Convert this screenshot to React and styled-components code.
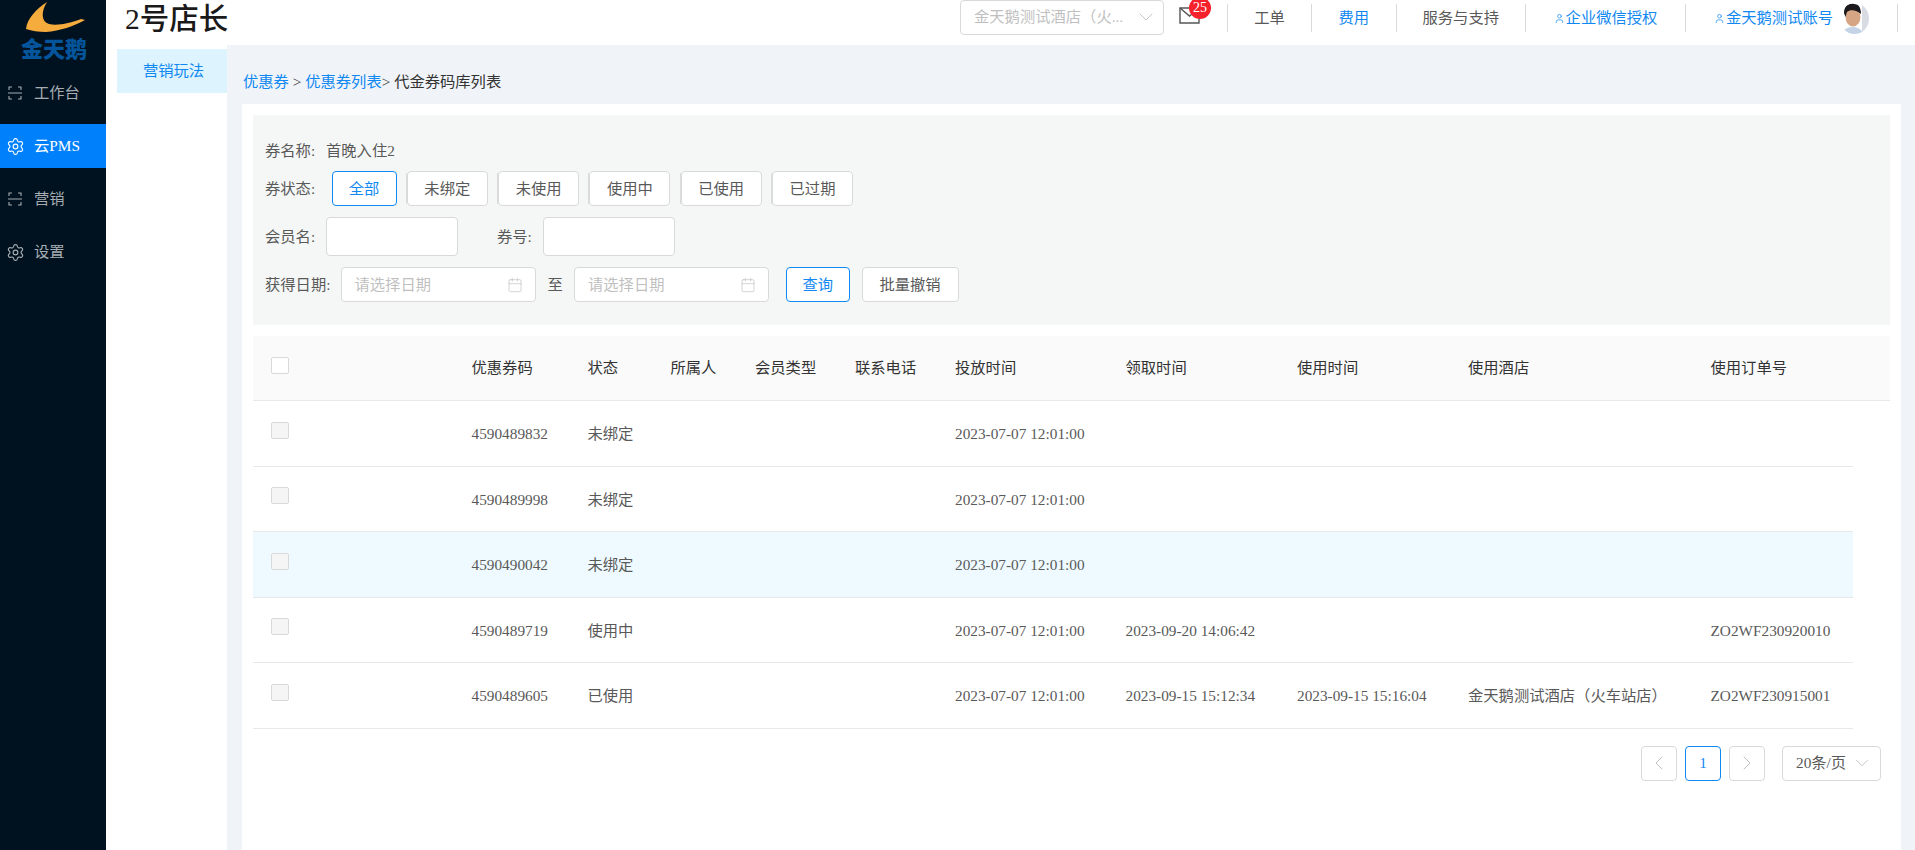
import React from "react";
import styled, { createGlobalStyle } from "styled-components";
import { Calendar, ChevronDown, ChevronLeft, ChevronRight, Settings, User } from "lucide-react";

const menu = [
  { name: "工作台", icon: "scan" },
  { name: "云PMS", icon: "gear", active: true },
  { name: "营销", icon: "scan" },
  { name: "设置", icon: "gear" },
];

const statuses = ["全部", "未绑定", "未使用", "使用中", "已使用", "已过期"];

const columns = ["优惠券码", "状态", "所属人", "会员类型", "联系电话", "投放时间", "领取时间", "使用时间", "使用酒店", "使用订单号"];

const coupons = [
  { code: "4590489832", status: "未绑定", sent: "2023-07-07 12:01:00" },
  { code: "4590489998", status: "未绑定", sent: "2023-07-07 12:01:00" },
  { code: "4590490042", status: "未绑定", sent: "2023-07-07 12:01:00", hover: true },
  { code: "4590489719", status: "使用中", sent: "2023-07-07 12:01:00", got: "2023-09-20 14:06:42", order: "ZO2WF230920010" },
  {
    code: "4590489605",
    status: "已使用",
    sent: "2023-07-07 12:01:00",
    got: "2023-09-15 15:12:34",
    used: "2023-09-15 15:16:04",
    hotel: "金天鹅测试酒店（火车站店）",
    order: "ZO2WF230915001",
  },
];

const App = () => {
  return (
    <Page>
      <GlobalStyle />
      <Sidebar>
        <Logo>
          <svg width="60" height="38" viewBox="0 0 60 38">
            <path d="M21 0 C10 7 1 17 0 27 C6 29 12 30 20 30 C34 29 48 24 59 18 L55 17 C44 21 32 24 23 22 C15 20 15 9 21 0 Z" fill="#f6ac3c" />
          </svg>
          <LogoText>金天鹅</LogoText>
        </Logo>
        {menu.map((item) => (
          <MenuItem key={item.name} $active={item.active}>
            {item.icon === "scan" ? <ScanIcon /> : <GearIcon size={19} strokeWidth={1.4} />}
            {item.name}
          </MenuItem>
        ))}
      </Sidebar>
      <Main>
        <TopBar>
          <Brand>2号店长</Brand>
          <HotelSelect>
            金天鹅测试酒店（火...
            <ChevronDown size={24} strokeWidth={0.9} />
          </HotelSelect>
          <Inbox>
            <MailIcon />
            <Badge>25</Badge>
          </Inbox>
          <TopLink $width={85} $first>工单</TopLink>
          <TopLink $width={84.5} $blue>费用</TopLink>
          <TopLink $width={129.5}>服务与支持</TopLink>
          <TopLink $width={160} $blue>
            <User size={11} strokeWidth={1.5} />
            企业微信授权
          </TopLink>
          <TopLink $width={212} $blue>
            <User size={11} strokeWidth={1.5} />
            金天鹅测试账号
            <Avatar />
          </TopLink>
        </TopBar>
        <Body>
          <SubNav>
            <SubNavItem>营销玩法</SubNavItem>
          </SubNav>
          <Content>
            <Breadcrumb>
              <a>优惠券</a> &gt; <a>优惠券列表</a>&gt; 代金券码库列表
            </Breadcrumb>
            <Card>
              <Filter>
                <NameRow>
                  <Label $width={61}>券名称:</Label>
                  <span>首晚入住2</span>
                </NameRow>
                <FilterRow>
                  <Label $width={66.5}>券状态:</Label>
                  <StatusGroup>
                    {statuses.map((s, i) => (
                      <StatusButton key={s} $active={i === 0} $narrow={i === 0}>
                        {s}
                      </StatusButton>
                    ))}
                  </StatusGroup>
                </FilterRow>
                <FilterRow>
                  <Label $width={61}>会员名:</Label>
                  <TextInput />
                  <Label $width={46} $left={39}>券号:</Label>
                  <TextInput />
                </FilterRow>
                <FilterRow>
                  <Label $width={75.5}>获得日期:</Label>
                  <DateInput>
                    请选择日期
                    <Calendar size={16} strokeWidth={1} />
                  </DateInput>
                  <To>至</To>
                  <DateInput>
                    请选择日期
                    <Calendar size={16} strokeWidth={1} />
                  </DateInput>
                  <ActionButton $primary $width={64.5}>查询</ActionButton>
                  <ActionButton $width={97}>批量撤销</ActionButton>
                </FilterRow>
              </Filter>
              <HeadRow>
                <Check $head />
                {columns.map((c) => (
                  <span key={c}>{c}</span>
                ))}
              </HeadRow>
              {coupons.map((c) => (
                <Row key={c.code} $hover={c.hover}>
                  <Check />
                  <span>{c.code}</span>
                  <span>{c.status}</span>
                  <span />
                  <span />
                  <span />
                  <span>{c.sent}</span>
                  <span>{c.got}</span>
                  <span>{c.used}</span>
                  <span>{c.hotel}</span>
                  <span>{c.order}</span>
                </Row>
              ))}
              <Pagination>
                <PageButton $muted>
                  <ChevronLeft size={24} strokeWidth={1} />
                </PageButton>
                <PageButton $active>1</PageButton>
                <PageButton $muted>
                  <ChevronRight size={24} strokeWidth={1} />
                </PageButton>
                <PageSize>
                  20条/页
                  <ChevronDown size={22} strokeWidth={1} />
                </PageSize>
              </Pagination>
            </Card>
          </Content>
        </Body>
      </Main>
    </Page>
  );
};

export default App;

const ScanIcon = () => (
  <svg width="16" height="16" viewBox="0 0 16 16" fill="none" stroke="currentColor" strokeWidth="1.1">
    <path d="M5 2 H2 V5 M11 2 H14 V5 M5 14 H2 V11 M11 14 H14 V11 M1 8 H15" />
  </svg>
);

const MailIcon = () => (
  <svg width="21" height="17" viewBox="0 0 21 17" fill="none" stroke="#555" strokeWidth="1.4">
    <path d="M1 1 H20 V16 H1 Z" />
    <path d="M1 1 L10.5 9 L15 5.5" />
  </svg>
);

const Avatar = () => (
  <AvatarWrap>
    <svg width="29" height="31" viewBox="0 0 29 31">
      <rect x="22" y="0" width="7" height="31" fill="#d8dbe4" />
      <path d="M2 31 C3 26 8 24 13 24 C17 24 22 26 23 31 Z" fill="#c4d4e6" />
      <ellipse cx="13" cy="14" rx="7.5" ry="9.5" fill="#d6a684" />
      <path d="M4 10 C4 3 9 0 14 1 C19 1 21 5 21 11 C17 7 10 6 7 9 L5.5 14 Z" fill="#1c1a1c" />
    </svg>
  </AvatarWrap>
);

const GlobalStyle = createGlobalStyle`
  html,
  body {
    margin: 0;
    height: 100%;
    overflow: hidden;
  }

  body {
    font-family: "Liberation Serif", "Noto Sans CJK SC", serif;
    font-size: 15.3px;
    line-height: 20px;
    color: #595959;
  }

  * {
    box-sizing: border-box;
  }
`;

const Page = styled.div`
  display: flex;
  height: 850px;
`;

const Sidebar = styled.aside`
  flex: 0 0 106px;
  background: #00121f;
`;

const Logo = styled.div`
  display: flex;
  flex-direction: column;
  align-items: flex-start;
  height: 66px;
  padding: 2px 0 0 26px;
  margin-bottom: 5px;

  svg {
    display: block;
  }
`;

const LogoText = styled.div`
  margin: -3px 0 0 -5px;
  font-family: "Noto Sans CJK SC", sans-serif;
  font-size: 22px;
  line-height: 20px;
  font-weight: 900;
  color: #05559c;
  white-space: nowrap;
`;

const MenuItem = styled.div`
  display: flex;
  align-items: center;
  gap: 11px;
  height: 44px;
  padding-left: 7px;
  margin-bottom: 9px;
  color: ${({ $active }) => ($active ? "#fff" : "#a6adb3")};
  background: ${({ $active }) => ($active ? "#0080fb" : "transparent")};

  svg {
    flex: none;
  }
`;

const GearIcon = styled(Settings)`
  margin: 0 -1.5px;
`;

const Main = styled.div`
  display: flex;
  flex-direction: column;
  flex: 1;
  min-width: 0;
`;

const TopBar = styled.header`
  display: flex;
  align-items: flex-start;
  height: 45px;
  padding: 4px 17px 0 19px;
  background: #fff;
`;

const Brand = styled.div`
  margin: 0 auto 0 0;
  font-size: 29.5px;
  line-height: 31px;
  font-weight: 500;
  color: #1a1a1a;
`;

const HotelSelect = styled.div`
  display: flex;
  align-items: center;
  justify-content: space-between;
  width: 204px;
  height: 34.5px;
  margin-top: -4px;
  padding: 0 5px 0 13px;
  color: #bfbfbf;
  white-space: nowrap;
  background: #fff;
  border: 1px solid #d9d9d9;
  border-radius: 4px;
`;

const Inbox = styled.div`
  position: relative;
  width: 21px;
  margin: 3px 27px 0 15px;
  line-height: 0;
`;

const Badge = styled.span`
  position: absolute;
  top: -10px;
  left: 10px;
  width: 22px;
  height: 22px;
  font-size: 14px;
  line-height: 22px;
  text-align: center;
  color: #fff;
  background: #f5222d;
  border-radius: 50%;
`;

const TopLink = styled.div`
  display: flex;
  align-items: center;
  justify-content: center;
  flex: none;
  gap: 1px;
  width: ${({ $width }) => $width}px;
  height: 28px;
  white-space: nowrap;
  color: ${({ $blue }) => ($blue ? "#1088f2" : "#595959")};
  border-right: 1px solid #d9d9d9;
  border-left: ${({ $first }) => ($first ? "1px solid #d9d9d9" : "none")};
`;

const AvatarWrap = styled.span`
  display: block;
  height: 31px;
  margin-left: 6px;
  overflow: hidden;
  border-radius: 50%;
`;

const Body = styled.div`
  display: flex;
  flex: 1;
  min-height: 0;
`;

const SubNav = styled.nav`
  flex: 0 0 121px;
  padding: 4px 0 0 11px;
  background: #fff;
`;

const SubNavItem = styled.div`
  height: 44px;
  padding-left: 3px;
  line-height: 44px;
  text-align: center;
  color: #1088f2;
  background: #ddf4ff;
`;

const Content = styled.main`
  display: flex;
  flex-direction: column;
  flex: 1;
  min-width: 0;
  padding: 0 14px 0 15px;
  background: #f0f4f8;
`;

const Breadcrumb = styled.div`
  height: 59px;
  padding: 27px 0 0 1px;
  color: #333;

  a {
    color: #1088f2;
  }
`;

const Card = styled.section`
  flex: 1;
  padding: 11px 11px 0;
  background: #fff;
`;

const Filter = styled.div`
  display: flex;
  flex-direction: column;
  gap: 11px;
  height: 210px;
  padding: 25px 12px 0;
  margin-bottom: 11px;
  background: #f5f7f7;
`;

const FilterRow = styled.div`
  display: flex;
  align-items: center;
  min-height: 20px;
`;

const NameRow = styled(FilterRow)`
  height: 20px;
  padding-top: 2px;
`;

const Label = styled.span`
  flex: none;
  width: ${({ $width }) => $width}px;
  margin-left: ${({ $left }) => $left || 0}px;
`;

const StatusGroup = styled.div`
  display: flex;
  gap: 10.3px;
`;

const StatusButton = styled.div`
  position: relative;
  width: ${({ $narrow }) => ($narrow ? 65 : 81)}px;
  height: 35px;
  line-height: 33px;
  text-align: center;
  color: ${({ $active }) => ($active ? "#1088f2" : "#595959")};
  background: #fff;
  border: 1px solid ${({ $active }) => ($active ? "#1088f2" : "#d9d9d9")};
  border-radius: 4px;

  &::before {
    content: "";
    display: ${({ $active }) => ($active ? "none" : "block")};
    position: absolute;
    top: 1px;
    bottom: 1px;
    left: -2px;
    width: 1px;
    background: #dcdcdc;
  }
`;

const TextInput = styled.div`
  flex: none;
  width: 132px;
  height: 39px;
  background: #fff;
  border: 1px solid #d9d9d9;
  border-radius: 4px;
`;

const DateInput = styled.div`
  display: flex;
  align-items: center;
  justify-content: space-between;
  flex: none;
  width: 195px;
  height: 35px;
  padding: 0 12px 0 13px;
  color: #bfbfbf;
  background: #fff;
  border: 1px solid #d9d9d9;
  border-radius: 4px;
`;

const To = styled.span`
  flex: none;
  width: 38.5px;
  padding-left: 1px;
  text-align: center;
`;

const ActionButton = styled.div`
  flex: none;
  width: ${({ $width }) => $width}px;
  height: 35px;
  margin-left: ${({ $primary }) => ($primary ? 16.5 : 11.5)}px;
  line-height: 34px;
  text-align: center;
  color: ${({ $primary }) => ($primary ? "#1088f2" : "#595959")};
  background: #fff;
  border: 1px solid ${({ $primary }) => ($primary ? "#1088f2" : "#d9d9d9")};
  border-radius: 4px;
`;

const gridColumns = "218.5px 116px 83px 84.5px 100px 100px 170.5px 171.5px 171px 242.5px 1fr";

const HeadRow = styled.div`
  display: grid;
  grid-template-columns: ${gridColumns};
  align-items: center;
  height: 65px;
  color: #333;
  background: #fafafa;
  border-bottom: 1px solid #e8e8e8;
`;

const Row = styled.div`
  display: grid;
  grid-template-columns: ${gridColumns};
  align-items: center;
  width: 1600px;
  height: 65.5px;
  padding-top: 2px;
  white-space: nowrap;
  background: ${({ $hover }) => ($hover ? "#eefaff" : "#fff")};
  border-bottom: 1px solid #e8e8e8;
`;

const Check = styled.span`
  display: block;
  width: 18px;
  height: 17px;
  margin: ${({ $head }) => ($head ? "-6px 0 0 18px" : "-8px 0 0 18px")};
  background: ${({ $head }) => ($head ? "#fff" : "#f5f5f5")};
  border: 1px solid #d9d9d9;
  border-radius: 2px;
`;

const Pagination = styled.div`
  display: flex;
  justify-content: flex-end;
  gap: 8px;
  padding-right: 9px;
  margin-top: 17px;
`;

const PageButton = styled.div`
  display: flex;
  align-items: center;
  justify-content: center;
  width: 36px;
  height: 35px;
  color: ${({ $active, $muted }) => ($active ? "#1088f2" : $muted ? "#bfbfbf" : "#595959")};
  border: 1px solid ${({ $active }) => ($active ? "#1088f2" : "#d9d9d9")};
  border-radius: 4px;
`;

const PageSize = styled.div`
  display: flex;
  align-items: center;
  justify-content: space-between;
  width: 99px;
  height: 35px;
  padding: 0 7px 0 13px;
  margin-left: 9px;
  white-space: nowrap;
  border: 1px solid #d9d9d9;
  border-radius: 4px;

  svg {
    color: #bfbfbf;
  }
`;
